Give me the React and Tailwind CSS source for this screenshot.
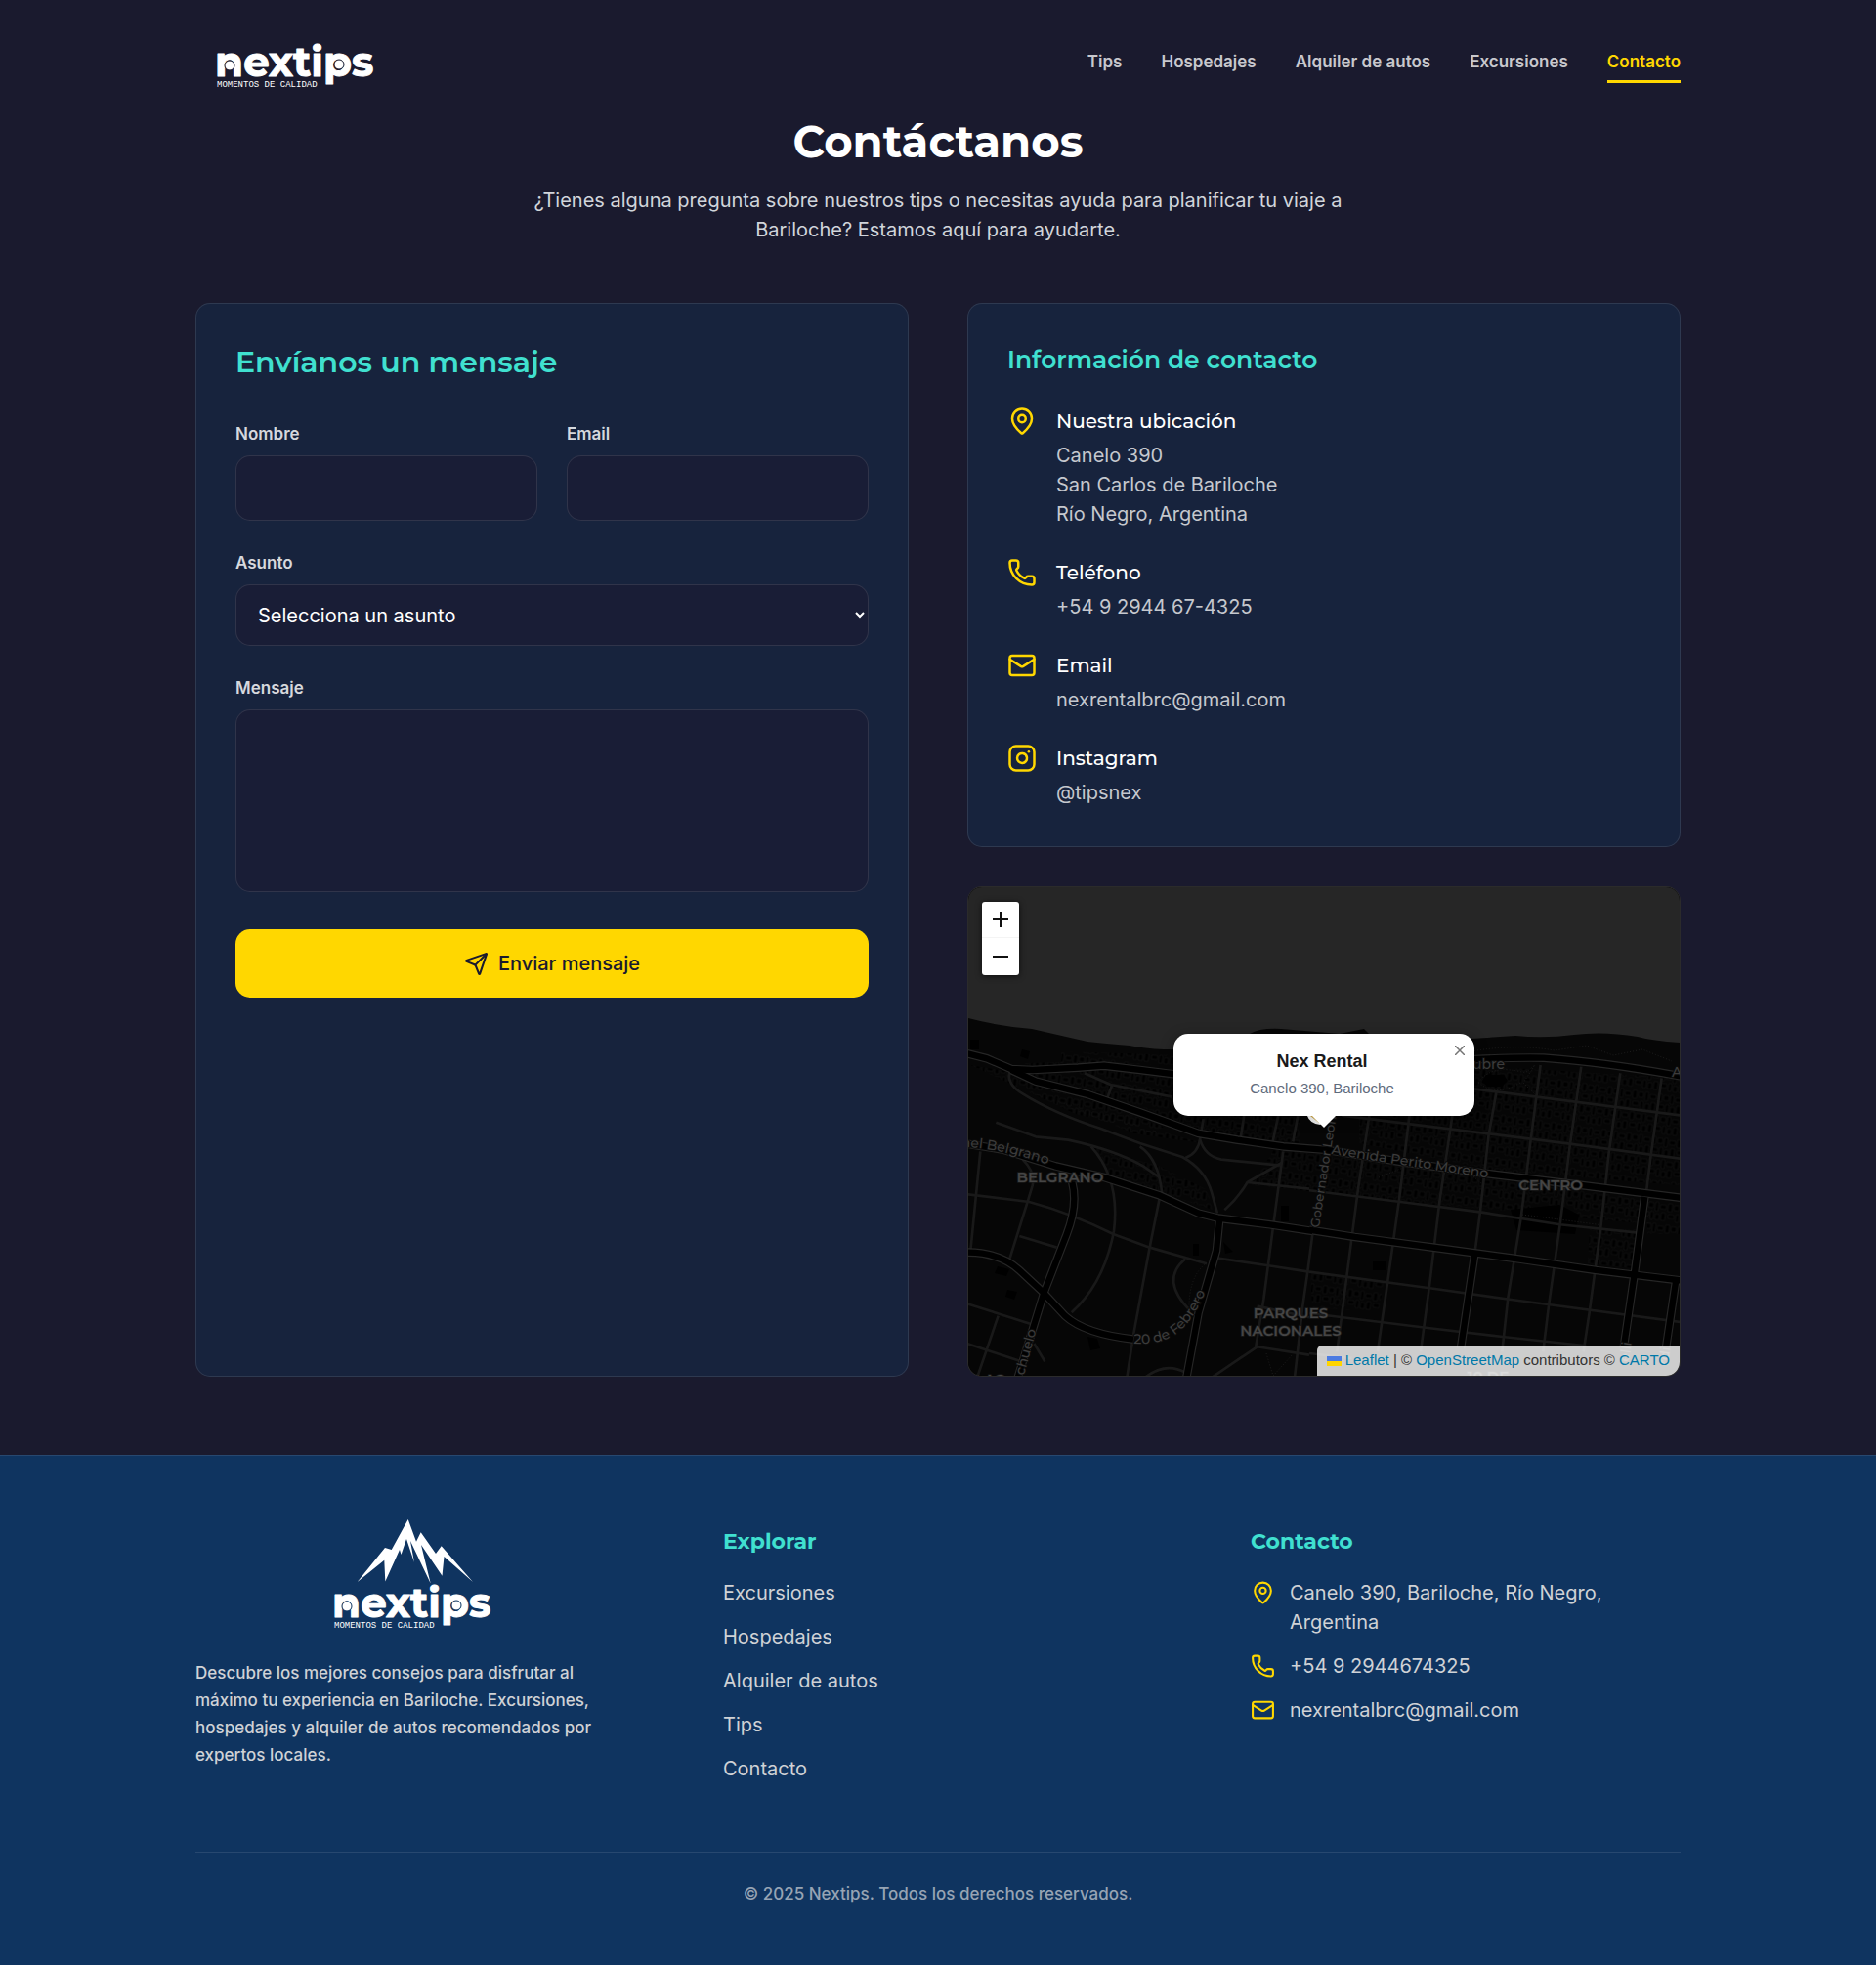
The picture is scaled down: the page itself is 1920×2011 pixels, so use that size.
import React from "react";
import { MapPin, Phone, Mail, Instagram, Send } from "lucide-react";

const body = "font-['Inter',sans-serif]";
const display = "font-['Montserrat','Inter',sans-serif]";

function Wordmark({ y, ground }) {
  return (
    <g fill="#fff">
      <text x="20" y={y} fontSize="42" fontWeight="700" fontFamily="Montserrat, sans-serif" stroke="#fff" strokeWidth="1" strokeLinejoin="round">
        nextips
      </text>
      <circle cx="35" cy={y - 11} r="5" stroke={ground} strokeWidth="1" />
      <circle cx="147" cy={y - 12} r="5" stroke={ground} strokeWidth="1" />
      <text x="22" y={y + 11} fontSize="9" fontFamily="'Liberation Mono', monospace">
        MOMENTOS DE CALIDAD
      </text>
    </g>
  );
}

function HeaderLogo() {
  return (
    <svg viewBox="0 0 200 55" className="h-[55px] w-[200px] overflow-visible" role="img" aria-label="Nextips">
      <Wordmark y={38} ground="#1a1a2e" />
    </svg>
  );
}

function FooterLogo() {
  return (
    <svg viewBox="0 0 200 128" className="mx-auto h-[128px] w-[200px] overflow-visible" role="img" aria-label="Nextips">
      <path
        fill="#fff"
        d="M45.7 69 L74 34 L80.7 36 L97.7 5 L106 27.7 L110.7 18.3 L126 40 L131.7 32.3 L164 69 L134.5 43 L132.5 62.7 L111 31 L120.7 70.5 L100 27 L104 49 L96 25 L90.5 41 L89 36 L74.3 68.5 L73.3 46.7 Z"
      />
      <Wordmark y={105} ground="#0f3460" />
    </svg>
  );
}

const navLinks = ["Tips", "Hospedajes", "Alquiler de autos", "Excursiones", "Contacto"];

function Header() {
  return (
    <header className="flex items-start justify-between pt-10 pb-[25px]">
      <a href="#inicio">
        <HeaderLogo />
      </a>
      <nav className="flex gap-10">
        {navLinks.map((label) => (
          <a
            key={label}
            href="#"
            className={
              label === "Contacto"
                ? "border-b-3 border-[#ffd700] pt-[10px] pb-[5px] text-[17px] leading-[27px] font-semibold text-[#ffd700]"
                : "border-b-3 border-transparent pt-[10px] pb-[5px] text-[17px] leading-[27px] font-semibold text-[#c8c8cd]"
            }
          >
            {label}
          </a>
        ))}
      </nav>
    </header>
  );
}

const labelCls = "mb-2 block text-[17px] leading-[27px] font-semibold text-[#d6d8dd]";
const fieldCls = "block w-full rounded-[15px] border border-white/10 bg-[#191d36] px-[18px] text-[20px] text-white";

function ContactForm() {
  return (
    <section className="rounded-[15px] border border-white/10 bg-[#17233d] p-10">
      <h2 className={`${display} mb-10 text-[30px] leading-10 font-semibold text-[#40e0d0]`}>Envíanos un mensaje</h2>
      <form className="flex flex-col gap-[30px]">
        <div className="grid grid-cols-1 gap-[30px] sm:grid-cols-2">
          <div>
            <label htmlFor="nombre" className={labelCls}>Nombre</label>
            <input id="nombre" type="text" className={`${fieldCls} h-[67px]`} />
          </div>
          <div>
            <label htmlFor="email" className={labelCls}>Email</label>
            <input id="email" type="email" className={`${fieldCls} h-[67px]`} />
          </div>
        </div>
        <div>
          <label htmlFor="asunto" className={labelCls}>Asunto</label>
          <select id="asunto" className={`${fieldCls} h-[63px]`}>
            <option>Selecciona un asunto</option>
          </select>
        </div>
        <div>
          <label htmlFor="mensaje" className={labelCls}>Mensaje</label>
          <textarea id="mensaje" className={`${fieldCls} h-[187px] resize-none py-4`} />
        </div>
        <button
          type="button"
          className="mt-2 flex h-[70px] items-center justify-center gap-[10px] rounded-[15px] bg-[#ffd700] text-[20px] font-medium text-[#1a1a2e]"
        >
          <Send className="size-[25px]" />
          Enviar mensaje
        </button>
      </form>
    </section>
  );
}

const infoItems = [
  { Icon: MapPin, title: "Nuestra ubicación", lines: ["Canelo 390", "San Carlos de Bariloche", "Río Negro, Argentina"] },
  { Icon: Phone, title: "Teléfono", lines: ["+54 9 2944 67-4325"] },
  { Icon: Mail, title: "Email", lines: ["nexrentalbrc@gmail.com"] },
  { Icon: Instagram, title: "Instagram", lines: ["@tipsnex"] },
];

function ContactInfo() {
  return (
    <section className="rounded-[15px] border border-white/10 bg-[#17233d] p-10">
      <h2 className={`${display} mb-[30px] text-[25px] leading-[35px] font-semibold text-[#40e0d0]`}>Información de contacto</h2>
      <div className="flex flex-col gap-[30px]">
        {infoItems.map(({ Icon, title, lines }) => (
          <div key={title} className="flex gap-5">
            <Icon className="size-[30px] shrink-0 text-[#ffd700]" />
            <div>
              <h3 className={`${display} mb-[5px] text-[20px] leading-[30px] font-medium text-white`}>{title}</h3>
              {lines.map((line) => (
                <p key={line} className="text-[20px] leading-[30px] text-[#c5c8ce]">{line}</p>
              ))}
            </div>
          </div>
        ))}
      </div>
    </section>
  );
}

const westRoads = [
  "M30 535 L90 550 L165 582 L230 585 L370 578 L450 572 L560 585 L680 600",
  "M165 585 L240 620 L400 660 L560 715 L740 780 L860 800 L1000 820 L1150 832",
  "M30 812 L140 830 L300 880 L450 915 L620 970 L740 1025 L800 1040 L960 1060 L1090 1080",
  "M352 930 Q370 1000 335 1090 L265 1270 L185 1530",
  "M30 1145 Q130 1145 190 1200 L265 1270 L330 1340 Q390 1395 540 1412",
  "M805 1040 L795 1140 L740 1330 L703 1530",
];
const eastRoads = [
  "M400 560 Q600 545 720 548 Q900 560 1145 605",
  "M60 832 L300 870 L560 905 L780 932 L1145 978",
  "M0 1076 L140 1098 L380 1130 L640 1165 L880 1200 L1145 1232",
  "M508 1150 L465 1440",
  "M1030 975 L1000 1200 L965 1440",
  "M1126 1230 L1095 1440",
];
const westStreets = [
  "M160 590 Q150 630 200 658 Q300 720 440 765 L560 810 L690 852 Q760 890 780 960 L798 1025",
  "M118 746 L240 790 L340 800 Q480 830 570 880 L620 915",
  "M410 820 Q500 920 480 1080 Q450 1240 350 1330",
  "M390 595 L470 630 L660 668",
  "M475 630 L455 685",
  "M560 820 Q620 860 628 970",
  "M745 795 Q740 840 700 855",
  "M745 800 Q760 850 810 860 L990 878",
  "M995 870 L890 930 Q860 980 820 1015",
  "M890 930 L1080 950",
  "M755 735 L745 795",
  "M880 725 L870 790 M985 725 L968 805 M1045 725 L1030 805",
  "M1000 835 L970 1060 L940 1290 L915 1440",
  "M30 967 L220 990 Q350 1025 480 1090 L590 1130 L765 1180",
  "M800 1163 L950 1185 L1080 1205",
  "M200 860 Q240 900 230 940 L215 990 L160 1165",
  "M190 1095 L305 1130",
  "M70 835 L40 1140",
  "M620 980 L590 1130 L540 1400 L520 1530",
  "M700 1165 Q620 1230 715 1325",
  "M30 1303 L225 1365 M125 1340 L60 1530 M30 1425 L195 1480",
  "M235 1425 L268 1480",
  "M780 1530 L920 1435 L1080 1460 M920 1310 L1080 1345",
  "M1090 1090 L1075 1205 L1060 1310 L1035 1530",
  "M575 1530 Q640 1480 700 1515",
];
const eastStreets = [
  "M185 720 L150 950 L115 1220 L85 1450",
  "M308 720 L275 990 L240 1240 L210 1450",
  "M440 720 L400 990 L370 1240 L342 1450",
  "M575 650 L550 790 L525 1020 L508 1150",
  "M710 570 L680 800 L650 1040 L610 1285 L592 1450",
  "M835 575 L800 820 L770 1060 L735 1310 L718 1450",
  "M955 595 L920 840 L895 1070 L860 1330 L842 1450",
  "M1082 610 L1050 840 L1035 960",
  "M480 640 L700 668 L1145 725",
  "M100 725 L560 782 L800 812 L1145 858",
  "M0 955 L280 990 L530 1022 L770 1060 L1010 1085",
  "M0 1205 L370 1255 L620 1290 L1145 1360",
  "M0 1332 L370 1378 L600 1405 L850 1432",
  "M0 1455 L130 1470",
];
const paths = (list, stroke, strokeWidth) =>
  list.map((d) => <path key={d} d={d} fill="none" stroke={stroke} strokeWidth={strokeWidth} strokeLinejoin="round" />);

const WEST = "translate(-11 -8) scale(0.3333)";
const EAST = "translate(349 -8) scale(0.3333)";

function StreetMap() {
  return (
    <svg viewBox="0 0 728 500" preserveAspectRatio="xMidYMid slice" className="block h-full w-full" aria-hidden="true">
      <defs>
        <pattern id="blocks" width="26" height="22" patternUnits="userSpaceOnUse" patternTransform="rotate(8)">
          <path d="M1 1h4v8h-4z M7 2h5v5h-5z M14 1h3v9h-3z M19 3h6v4h-6z M2 12h6v4h-6z M10 11h3v8h-3z M15 13h4v6h-4z M21 11h4v8h-4z" fill="#000" stroke="#141414" strokeWidth="0.6" />
        </pattern>
        <path id="febrero" d="M169 467 Q207 470 226 444 Q240 426 252 390" />
        <path id="belgrano-st" d="M-6 266 Q40 267 110 294" />
        <path id="perito" d="M371 273 L580 305" />
        <path id="gobernador" d="M359 349 L378 225" />
      </defs>
      <rect width="728" height="500" fill="#060606" />
      <path fill="#262626" d="M0 0H728V159Q700 157 685 153Q650 147 620 151Q590 155 560 152L515 155L412 152L405 145L380 150L320 145Q298 144 288 150L285 166H200Q180 165 165 162Q140 160 122 158L100 153L65 145Q30 142 0 134Z" />
      <g fill="url(#blocks)">
        <path d="M58 180 L130 178 L220 190 L340 235 L340 262 L240 250 L180 226 L70 198Z" />
        <path d="M2 182 L50 190 L200 245 L190 252 L110 232Z" />
        <path d="M60 209 L150 236 L240 262 L170 252Z" />
        <path d="M95 168 L220 172 L220 182 L95 180Z" />
        <path d="M126 266 L195 285 L245 310 L250 330 L195 312 L142 292Z" />
        <path d="M315 265 L420 280 L700 315 L700 345 L480 325 L290 305Z" />
        <path d="M400 232 L470 180 L728 195 V305 L540 290 L400 262Z" />
        <path d="M350 395 L425 405 L420 435 L352 430Z" />
        <path d="M636 350 L690 350 L680 390 L634 385Z M695 320H728V355H695Z" />
      </g>
      <g fill="#000">
        <path d="M530 192h18l4 6-6 6h-15l-5-6Z M2 156h9v10H2z M55 166l8 2-2 8-8-3z M414 383h13v9h-13z M555 330l50-5 20 10-4 20-60-4Z M320 326h8v16h-8z M30 388l12 3-3 7-12-3z M40 412l10 2-3 8-9-3z M122 460l10 2 3 10-10 2z M261 363l10 10-8 2z M230 365h6v12h-6z" />
      </g>
      <g transform={WEST}>{paths(westStreets, "#191919", 8)}</g>
      <g transform={EAST}>{paths(eastStreets, "#191919", 8)}</g>
      <g transform={WEST}>{paths(westRoads, "#262626", 26)}</g>
      <g transform={EAST}>{paths(eastRoads, "#262626", 26)}</g>
      <g transform={WEST}>{paths(westRoads, "#000", 19)}</g>
      <g transform={EAST}>{paths(eastRoads, "#000", 19)}</g>
      <g fill="none" stroke="#1c1c1c" strokeDasharray="1 2">
        <path d="M515 168 Q560 160 600 167 L633 162 L660 172 L690 166 L720 178" />
        <path d="M522 200 Q535 180 570 190 L580 182 L568 200 L583 215 M522 200 Q540 215 565 200" />
        <path d="M242 386 Q225 400 226 434" />
        <path d="M567 335 L650 346 M305 477 L312 500 L332 478" />
        <path d="M420 297 L450 285 L510 290 L526 304" />
      </g>
      <g fontFamily="'Montserrat','DejaVu Sans',sans-serif" fontSize="14" fontWeight="500" fill="#3c3c3c" stroke="#0a0a0a" strokeWidth="2" paintOrder="stroke">
        <text><textPath href="#belgrano-st">ael Belgrano</textPath></text>
        <text><textPath href="#febrero">20 de Febrero</textPath></text>
        <text><textPath href="#perito">Avenida Perito Moreno</textPath></text>
        <text fontSize="13"><textPath href="#gobernador">Gobernador Leon</textPath></text>
        <text x="516" y="186">ubre</text>
        <text x="720" y="194">A</text>
        <text transform="translate(57 500) rotate(-75)">chuelo</text>
        <text transform="translate(676 486) rotate(-82)">elli</text>
        <text transform="translate(716 490) rotate(-82)">rdi</text>
      </g>
      <g fontFamily="'Montserrat','Inter',sans-serif" fontSize="15" fontWeight="600" fill="#454545" stroke="#1a1a1a" strokeWidth="1.5" paintOrder="stroke" textAnchor="middle">
        <text x="94" y="302">BELGRANO</text>
        <text x="596" y="310">CENTRO</text>
        <text x="330" y="441">PARQUES</text>
        <text x="330" y="459">NACIONALES</text>
        <text x="22" y="509">LAS</text>
        <text x="532" y="506">10 DE</text>
      </g>
    </svg>
  );
}

function MapCard() {
  return (
    <section
      aria-label="Mapa"
      className="relative h-[502px] overflow-hidden rounded-[15px] border border-white/15 bg-[#060606] font-['Liberation_Sans',sans-serif]"
    >
      <StreetMap />
      <div className="absolute top-[15px] left-[14px] flex flex-col rounded-[3px] bg-white text-[#111] shadow-[0_1px_6px_rgba(0,0,0,0.65)]">
        <button type="button" aria-label="Acercar" className="flex h-[37px] w-[38px] items-center justify-center border-b border-[#f4f4f4]">
          <svg viewBox="0 0 16 16" className="size-4" stroke="currentColor" strokeWidth="2"><path d="M0 8h16M8 0v16" /></svg>
        </button>
        <button type="button" aria-label="Alejar" className="flex h-[38px] w-[38px] items-center justify-center">
          <svg viewBox="0 0 16 16" className="size-4" stroke="currentColor" strokeWidth="2"><path d="M0 8h16" /></svg>
        </button>
      </div>

      <div className="absolute top-[150px] left-1/2 w-[308px] -translate-x-1/2">
        <div className="relative flex h-[84px] flex-col items-center justify-center rounded-[15px] bg-white pr-1 shadow-[0_3px_14px_rgba(0,0,0,0.4)]">
          <p className="text-[18px] leading-[27px] font-bold text-[#1a1a1a]">Nex Rental</p>
          <p className="text-[15px] leading-[27px] text-[#5f6b7c]">Canelo 390, Bariloche</p>
          <button type="button" aria-label="Cerrar" className="absolute top-3 right-[10px] text-[#757575]">
            <svg viewBox="0 0 10 10" className="size-[10px]" stroke="currentColor" strokeWidth="1.5"><path d="M0 0l10 10M10 0L0 10" /></svg>
          </button>
        </div>
        <svg viewBox="0 0 40 12" className="relative mx-auto block h-3 w-10">
          <path d="M3 0a16 12 0 0 0 13 9L30 0Z" fill="#ddd" />
          <path d="M6 0l9 7 4-2-7-5z" fill="#b8963e" />
          <path d="M8 0h24L20 12z" fill="#fff" />
        </svg>
      </div>

      <div className="absolute right-0 bottom-0 flex h-[31px] items-center gap-1 rounded-tl-[5px] bg-white/80 px-[10px] text-[15px] text-[#333]">
        <svg viewBox="0 0 15 10" className="h-[10px] w-[15px]" aria-hidden="true">
          <path fill="#4c7be1" d="M0 0h15v5H0z" />
          <path fill="#ffd500" d="M0 5h15v5H0z" />
        </svg>
        <p>
          <a href="#" className="text-[#0078a8]">Leaflet</a> | © <a href="#" className="text-[#0078a8]">OpenStreetMap</a> contributors © <a href="#" className="text-[#0078a8]">CARTO</a>
        </p>
      </div>
    </section>
  );
}

const footerHeading = `${display} mb-5 text-[22px] leading-[35px] font-bold text-[#40e0d0]`;
const explore = ["Excursiones", "Hospedajes", "Alquiler de autos", "Tips", "Contacto"];
const footerContact = [
  { Icon: MapPin, text: "Canelo 390, Bariloche, Río Negro, Argentina" },
  { Icon: Phone, text: "+54 9 2944674325" },
  { Icon: Mail, text: "nexrentalbrc@gmail.com" },
];

function Footer() {
  return (
    <footer className="border-t border-white/10 bg-[#0f3460] px-10 py-15 text-[20px] leading-[30px] text-[#cfd2d6]">
      <div className="mx-auto max-w-[1520px]">
        <div className="grid grid-cols-1 gap-x-25 gap-y-10 md:grid-cols-3">
          <div>
            <FooterLogo />
            <p className="mt-5 text-[17px] leading-7 font-medium">
              Descubre los mejores consejos para disfrutar al máximo tu experiencia en Bariloche. Excursiones, hospedajes y alquiler de autos recomendados por expertos locales.
            </p>
          </div>
          <div className="py-[10px]">
            <h2 className={footerHeading}>Explorar</h2>
            <ul className="flex flex-col gap-[15px]">
              {explore.map((item) => (
                <li key={item}><a href="#">{item}</a></li>
              ))}
            </ul>
          </div>
          <div className="py-[10px]">
            <h2 className={footerHeading}>Contacto</h2>
            <ul className="flex flex-col gap-[15px]">
              {footerContact.map(({ Icon, text }) => (
                <li key={text} className="flex gap-[15px]">
                  <Icon className="h-[30px] w-[25px] shrink-0 text-[#ffd700]" />
                  <span>{text}</span>
                </li>
              ))}
            </ul>
          </div>
        </div>
        <div className="mt-15 border-t border-white/10 pt-[30px] text-center text-[17px] leading-[25px] font-medium text-[#97a4b4]">
          © 2025 Nextips. Todos los derechos reservados.
        </div>
      </div>
    </footer>
  );
}

export default function App() {
  return (
    <div className={`${body} min-h-screen bg-[#1a1a2e] text-white`}>
      <div className="px-10">
        <div className="mx-auto max-w-[1520px]">
          <Header />
          <main className="pb-20">
            <div className="mx-auto mb-15 max-w-[840px] text-center">
              <h1 className={`${display} mb-5 text-[45px] leading-[50px] font-bold`}>Contáctanos</h1>
              <p className="text-[20px] leading-[30px] text-[#d1d5db]">
                ¿Tienes alguna pregunta sobre nuestros tips o necesitas ayuda para planificar tu viaje a Bariloche? Estamos aquí para ayudarte.
              </p>
            </div>
            <div className="grid grid-cols-1 gap-15 lg:grid-cols-2">
              <ContactForm />
              <div className="flex flex-col gap-10">
                <ContactInfo />
                <MapCard />
              </div>
            </div>
          </main>
        </div>
      </div>
      <Footer />
    </div>
  );
}
